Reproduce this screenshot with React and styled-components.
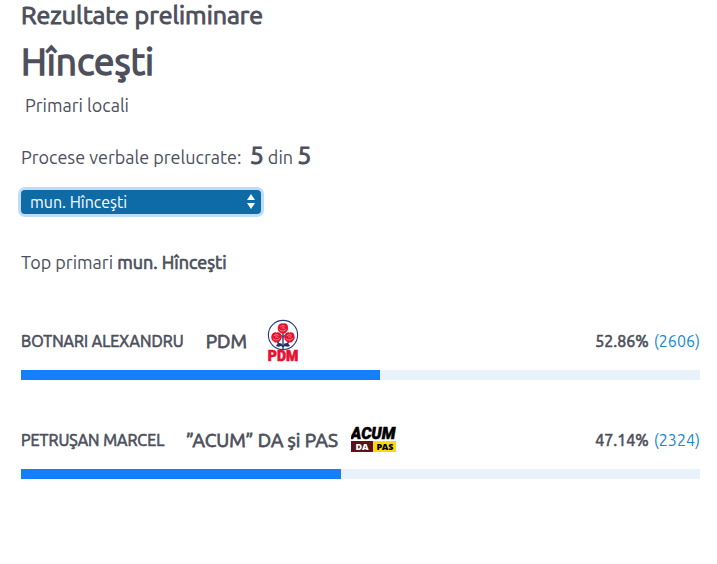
import React, { useState } from "react";
import styled, { createGlobalStyle, css } from "styled-components";

const GlobalStyle = createGlobalStyle`
  body {
    margin: 0;
    background: #fff;
    color: #4d4f5c;
    font-family: Ubuntu, "Noto Sans", "Open Sans", sans-serif;
    font-size: 18px;
    line-height: 24px;
  }
`

// regular weight thickened by an outline
const heavy = css`
  font-weight: 400;
  -webkit-text-stroke: 0.04em currentColor;
`

const Page = styled.main`
  padding: 0 17px 40px 21px;
`

const Heading = styled.h2`
  ${heavy}
  margin: 0;
  font-size: 25px;
  line-height: 30px;
`

const City = styled.h1`
  ${heavy}
  margin: 10px 0 0;
  font-size: 37px;
  line-height: 44px;
`

const Kind = styled.p`
  margin: 9px 4px 0;
`

const Processed = styled.p`
  margin: 22px 0 0;
  line-height: 32px;
  white-space: pre-wrap;
`

const Count = styled.strong`
  ${heavy}
  font-size: 25px;
`

const SelectBox = styled.div`
  position: relative;
  width: 240px;
  margin-top: 17px;
`

const Select = styled.select`
  display: block;
  appearance: none;
  width: 100%;
  height: 24px;
  padding: 0 24px 0 9px;
  border: 0;
  border-radius: 4px;
  outline: 0;
  background: #0f6ba5;
  box-shadow: 0 0 0 3px #bfdbfe;
  color: #fff;
  font-family: inherit;
  font-size: 16px;
  line-height: 24px;
`

const Arrows = styled.svg`
  position: absolute;
  top: 4px;
  right: 6px;
  pointer-events: none;
`

const Subtitle = styled.h3`
  margin: 36px 0 0;
  font-size: 18px;
  font-weight: 400;

  strong {
    ${heavy}
  }
`

const List = styled.ul`
  list-style: none;
  margin: 43px 0 0;
  padding: 0;
  display: flex;
  flex-direction: column;
  gap: 36px;
`

const Result = styled.div`
  display: flex;
  align-items: center;
  height: 48px;
`

const Name = styled.span`
  ${heavy}
  font-size: 16px;
  margin-right: 22px;
`

const Party = styled.span`
  ${heavy}
  font-size: 19px;
  margin-right: 13px;
`

const Score = styled.span`
  margin-left: auto;
  display: flex;
  gap: 5px;
  font-size: 16px;
`

const Percent = styled.strong`
  ${heavy}
`

const Votes = styled.a`
  color: #1888cf;
  text-decoration: none;
`

const Track = styled.div`
  height: 10px;
  margin-top: 5px;
  background: #e9f1fa;
`

const Fill = styled.div`
  height: 100%;
  background: #147efb;
`

const Rose = ({ x, y }) => (
  <g transform={`translate(${x} ${y})`}>
    <path
      d="M-4.8-2.4C-3.8-5.4-1-5.6 0-4.8C2-5.800 4.600-4.400 4.800-2.200C5.900 0 4.800 2.300 3.500 3.200C2.500 5.400-1 5.800-2.800 3.900C-5 3.200-5.800 0-4.800-2.400Z"
      fill="#e8112d"
    />
    <path
      d="M-2.600-1.600C-1.400-3.200 1.400-3.200 2.200-1.600M-1.200-.2C0-1.400 1.600-.6 1 .5M-3.600 1C-2 3 1.600 3 3.400.6"
      fill="none"
      stroke="#fff"
      strokeWidth=".5"
    />
  </g>
)

const PdmLogo = () => (
  <svg width="46" height="48" viewBox="0 -2 46 48" role="img" aria-label="PDM">
    <circle cx="23" cy="16" r="14.6" fill="#fff" stroke="#2b3c78" strokeWidth="1.1" />
    <path
      d="M23 14V30M17 22C18 26 21 25 23 28M29 22C28 26 25 25 23 28"
      fill="none"
      stroke="#1f2f6b"
      strokeWidth="1.3"
    />
    <path
      d="M22.500 25C20 23.500 17 24.500 16 27C19 28.500 21.500 27.500 22.500 25ZM23.500 25C26 23.500 29 24.500 30 27C27 28.500 24.500 27.500 23.500 25ZM22.500 19.500L20.500 16L22.500 16.500ZM23.500 19.500L25.500 16L23.500 16.500Z"
      fill="#1f2f6b"
    />
    <Rose x={16.5} y={18.5} />
    <Rose x={29.5} y={18.5} />
    <Rose x={23} y={9.5} />
    <text
      x="23"
      y="42"
      textAnchor="middle"
      fontFamily="Roboto, sans-serif"
      fontWeight="900"
      fontSize="14"
      fill="#e8112d"
      stroke="#e8112d"
      strokeWidth=".6"
    >
      PDM
    </text>
  </svg>
)

const AcumLogo = () => (
  <svg width="46" height="36" viewBox="0 0 46 36" role="img" aria-label="ACUM DA PAS">
    <text
      x="22"
      y="17"
      textAnchor="middle"
      fontFamily="Roboto, sans-serif"
      fontStyle="italic"
      fontWeight="900"
      fontSize="16"
      fill="#000"
      stroke="#000"
      strokeWidth=".5"
    >
      ACUM
    </text>
    <path d="M0 19H22V30H0Z" fill="#5b1218" />
    <path d="M22 19H45V30H22Z" fill="#fcd90f" />
    <g fontFamily="Noto Sans, sans-serif" fontWeight="900" fontSize="9" textAnchor="middle">
      <text x="11" y="28" fill="#fff">DA</text>
      <text x="34" y="28" fill="#000">PAS</text>
    </g>
  </svg>
)

const candidates = [
  { name: "BOTNARI ALEXANDRU", party: "PDM", logo: <PdmLogo />, percent: 52.86, votes: 2606 },
  { name: "PETRUŞAN MARCEL", party: "”ACUM” DA și PAS", logo: <AcumLogo />, percent: 47.14, votes: 2324 },
]

const App = () => {
  const [town, setTown] = useState("mun. Hînceşti")

  return (
    <>
      <GlobalStyle />
      <Page>
        <Heading>Rezultate preliminare</Heading>
        <City>Hînceşti</City>
        <Kind>Primari locali</Kind>
        <Processed>
          Procese verbale prelucrate:{"  "}<Count>5</Count> din <Count>5</Count>
        </Processed>
        <SelectBox>
          <Select aria-label="Localitate" value={town} onChange={(e) => setTown(e.target.value)}>
            <option>mun. Hînceşti</option>
          </Select>
          <Arrows width="8" height="16" viewBox="0 0 8 16" fill="#fff" aria-hidden="true">
            <path d="M4 0L8 6H0ZM4 15L8 9H0Z" />
          </Arrows>
        </SelectBox>
        <Subtitle>
          Top primari <strong>{town}</strong>
        </Subtitle>
        <List>
          {candidates.map((c) => (
            <li key={c.name}>
              <Result>
                <Name>{c.name}</Name>
                <Party>{c.party}</Party>
                {c.logo}
                <Score>
                  <Percent>{c.percent}%</Percent>
                  <Votes href="#">({c.votes})</Votes>
                </Score>
              </Result>
              <Track>
                <Fill style={{ width: `${c.percent}%` }} />
              </Track>
            </li>
          ))}
        </List>
      </Page>
    </>
  )
}

export default App
